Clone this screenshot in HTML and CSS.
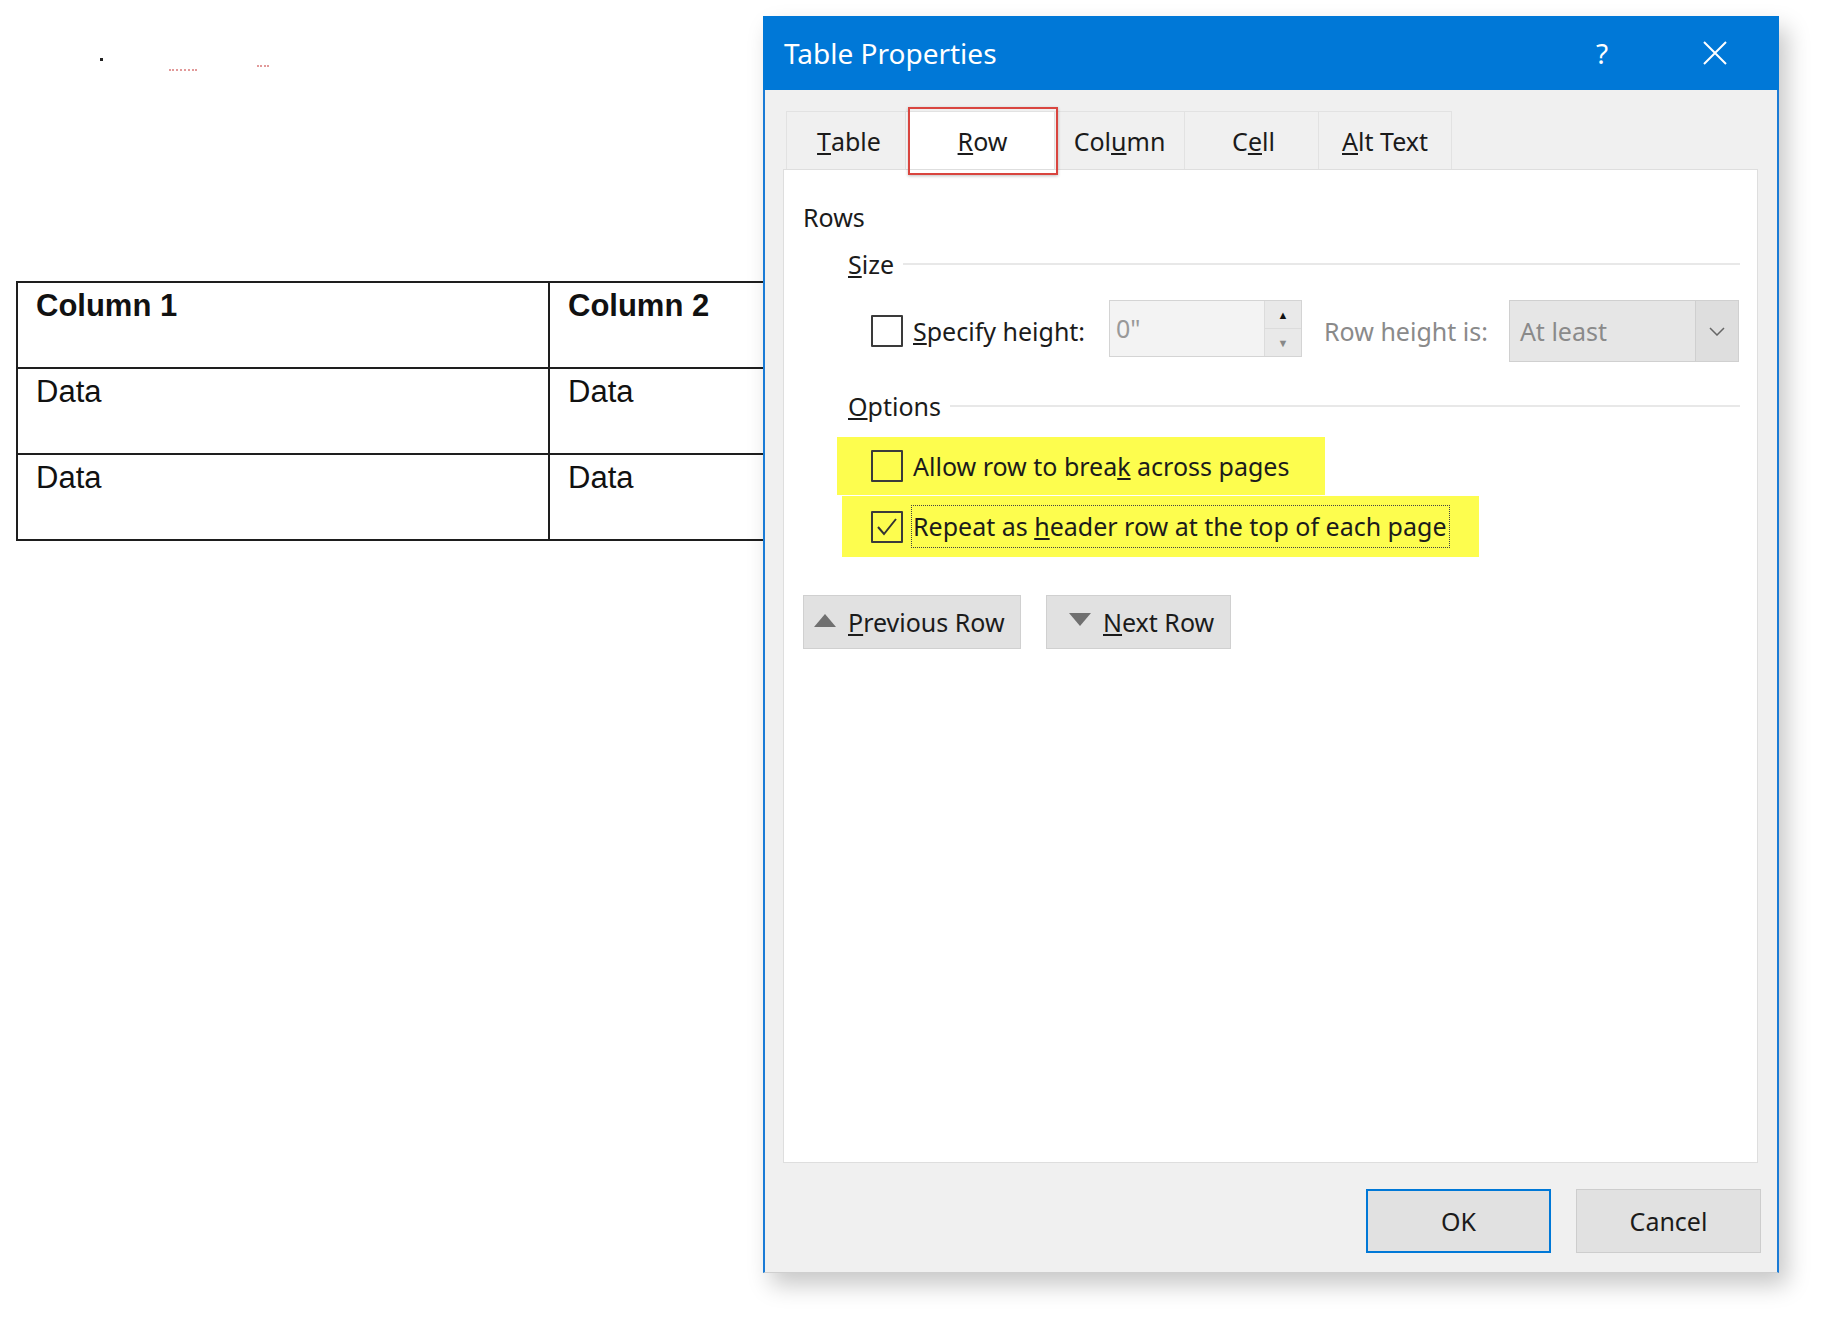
FILE: index.html
```html
<!DOCTYPE html>
<html lang="en">
<head>
    <meta charset="UTF-8">
    <title>Table Properties</title>
    <link rel="stylesheet" href="styles.css">
</head>
<body>

    <div class="doc">
        <div class="marks">
            <span class="mark-dot"></span>
            <span class="mark-red"></span>
            <span class="mark-red short"></span>
        </div>

        <table class="word-table">
            <tr>
                <th>Column 1</th>
                <th>Column 2</th>
            </tr>
            <tr>
                <td>Data</td>
                <td>Data</td>
            </tr>
            <tr>
                <td>Data</td>
                <td>Data</td>
            </tr>
        </table>
    </div>

    <div class="dialog">
        <div class="titlebar">
            <span class="title">Table Properties</span>
            <span class="help">?</span>
            <span class="close">
                <svg width="24" height="24" viewBox="0 0 24 24"><path d="M1 1 L23 23 M23 1 L1 23" stroke="#fff" stroke-width="2" fill="none"/></svg>
            </span>
        </div>

        <div class="dialog-body">
            <div class="tabs">
                <div class="tab tab-table"><u>T</u>able</div>
                <div class="tab tab-row selected"><u>R</u>ow</div>
                <div class="tab tab-column">Col<u>u</u>mn</div>
                <div class="tab tab-cell">C<u>e</u>ll</div>
                <div class="tab tab-alt"><u>A</u>lt Text</div>
            </div>

            <div class="panel">
                <div class="section-title">Rows</div>

                <div class="group-head">
                    <span><u>S</u>ize</span>
                    <span class="group-line"></span>
                </div>

                <div class="size-row">
                    <span class="checkbox"></span>
                    <span class="label"><u>S</u>pecify height:</span>
                    <div class="spin-input">
                        <span class="spin-value">0"</span>
                        <span class="spin-buttons">
                            <span class="spin-up">&#9650;</span>
                            <span class="spin-down">&#9660;</span>
                        </span>
                    </div>
                    <span class="label disabled height-label">Row height is:</span>
                    <div class="select">
                        <span class="select-value">At least</span>
                        <span class="select-arrow">
                            <svg width="16" height="9" viewBox="0 0 16 9"><path d="M1 1 L8 8 L15 1" stroke="#666" stroke-width="1.5" fill="none"/></svg>
                        </span>
                    </div>
                </div>

                <div class="group-head options-head">
                    <span><u>O</u>ptions</span>
                    <span class="group-line"></span>
                </div>

                <div class="option option-break">
                    <span class="checkbox"></span>
                    <span class="label">Allow row to brea<u>k</u> across pages</span>
                </div>
                <div class="option option-repeat">
                    <span class="checkbox">
                        <svg width="28" height="28" viewBox="0 0 28 28"><path d="M5 14 L11 21 L23 6" stroke="#333" stroke-width="2" fill="none"/></svg>
                    </span>
                    <span class="label focused">Repeat as <u>h</u>eader row at the top of each page</span>
                </div>

                <div class="nav-buttons">
                    <button class="nav-btn prev"><span class="tri-up"></span><span><u>P</u>revious Row</span></button>
                    <button class="nav-btn next"><span class="tri-down"></span><span><u>N</u>ext Row</span></button>
                </div>
            </div>

            <div class="footer">
                <button class="dlg-btn default">OK</button>
                <button class="dlg-btn">Cancel</button>
            </div>
        </div>
    </div>

</body>
</html>
```

FILE: styles.css
```css
body {
    margin: 0;
    background-color: #fff;
    font-family: "Noto Sans", "Open Sans", sans-serif;
    color: #1b1b1b;
    width: 1826px;
    height: 1318px;
    overflow: hidden;
    position: relative;
}

/* document behind the dialog */
.doc {
    padding: 56px 0 0 16px;
    font-family: "Liberation Sans", Arial, sans-serif;
}
.marks {
    height: 225px;
    display: flex;
    align-items: flex-start;
}
.mark-dot {
    width: 3px;
    height: 3px;
    background-color: #222;
    margin: 2px 0 0 84px;
}
.mark-red {
    width: 28px;
    height: 0;
    border-top: 2px dotted #e29a9a;
    margin: 13px 0 0 66px;
}
.mark-red.short {
    width: 12px;
    margin: 9px 0 0 60px;
}
.word-table {
    border-collapse: collapse;
    border: 2px solid #1e1e1e;
    width: 1000px;
    color: #111;
}
.word-table th,
.word-table td {
    border: 2px solid #1e1e1e;
    box-sizing: border-box;
    height: 86px;
    padding: 5px 18px 0;
    text-align: left;
    vertical-align: top;
    font-size: 31px;
}
.word-table th {
    font-weight: bold;
}
.word-table th:first-child {
    width: 532px;
}

/* dialog window */
.dialog {
    position: absolute;
    left: 763px;
    top: 16px;
    width: 1016px;
    height: 1257px;
    box-sizing: border-box;
    border-left: 2px solid #1a7bd6;
    border-right: 2px solid #1a7bd6;
    border-bottom: 1px solid #cfcfcf;
    display: flex;
    flex-direction: column;
    box-shadow: 8px 12px 22px rgba(0, 0, 0, 0.22);
    font-size: 25px;
}
.titlebar {
    height: 74px;
    background-color: #0078d7;
    color: #fff;
    display: flex;
    align-items: center;
    margin: 0 -2px;
    padding-left: 21px;
}
.title {
    font-size: 28px;
    flex: 1;
}
.help {
    font-size: 28px;
    width: 30px;
    text-align: center;
    margin-right: 86px;
}
.close {
    display: flex;
    margin-right: 52px;
}
.dialog-body {
    flex: 1;
    background-color: #f0f0f0;
    display: flex;
    flex-direction: column;
    padding: 21px 19px 19px 18px;
}

/* tabs */
.tabs {
    display: flex;
    height: 58px;
    padding-left: 3px;
}
.tab {
    box-sizing: border-box;
    display: flex;
    align-items: center;
    justify-content: center;
    border: 1px solid #e2e2e2;
    border-bottom: none;
    border-left: none;
    padding-top: 1px;
}
.tab-table { width: 120px; border-left: 1px solid #e2e2e2; padding-left: 6px; }
.tab-row { width: 149px; padding-left: 5px; }
.tab-column { width: 130px; }
.tab-cell { width: 134px; padding-left: 4px; }
.tab-alt { width: 133px; }
.tab.selected {
    background-color: #fff;
    position: relative;
    z-index: 1;
}
.tab.selected::after {
    content: "";
    position: absolute;
    left: 2px;
    right: -4px;
    top: -5px;
    bottom: -6px;
    border: 2px solid #d9453f;
    box-shadow: 0 1px 3px rgba(0, 0, 0, 0.25);
}

/* panel */
.panel {
    flex: 1;
    background-color: #fff;
    border: 1px solid #dedede;
    padding-top: 31px;
}
.section-title {
    margin-left: 19px;
    line-height: 32px;
}
.group-head {
    display: flex;
    align-items: center;
    margin: 15px 17px 0 64px;
    line-height: 32px;
}
.group-line {
    flex: 1;
    height: 2px;
    background-color: #e8e8e8;
    margin-left: 9px;
}
.options-head {
    margin-top: 28px;
}
.checkbox {
    width: 32px;
    height: 32px;
    box-sizing: border-box;
    border: 2px solid #3a3a3a;
    border-radius: 1px;
    display: flex;
    align-items: center;
    justify-content: center;
    flex-shrink: 0;
}
.size-row {
    display: flex;
    align-items: center;
    margin: 20px 0 0 87px;
    height: 62px;
}
.size-row > * {
    flex-shrink: 0;
}
.label {
    margin-left: 10px;
}
.disabled {
    color: #8a8a8a;
}
.spin-input {
    margin-left: 24px;
    width: 193px;
    height: 57px;
    box-sizing: border-box;
    border: 1px solid #d4d4d4;
    background-color: #f3f3f3;
    display: flex;
    align-self: flex-start;
}
.spin-value {
    flex: 1;
    color: #999;
    padding: 10px 0 0 6px;
}
.spin-buttons {
    width: 36px;
    display: flex;
    flex-direction: column;
    border-left: 1px solid #dcdcdc;
    background-color: #e9e9e9;
    font-size: 11px;
}
.spin-buttons span {
    flex: 1;
    display: flex;
    align-items: center;
    justify-content: center;
}
.spin-up {
    color: #111;
    border-bottom: 1px solid #dcdcdc;
}
.spin-down {
    color: #888;
}
.height-label {
    margin-left: 22px;
}
.select {
    margin-left: 21px;
    width: 230px;
    height: 62px;
    box-sizing: border-box;
    border: 1px solid #d0d0d0;
    background-color: #e6e6e6;
    display: flex;
}
.select-value {
    flex: 1;
    color: #8a8a8a;
    display: flex;
    align-items: center;
    padding-left: 10px;
}
.select-arrow {
    width: 42px;
    border-left: 1px solid #cfcfcf;
    background-color: #dedede;
    display: flex;
    align-items: center;
    justify-content: center;
}

/* options with yellow highlight */
.option {
    display: flex;
    align-items: center;
    background-color: #fdfd4e;
    box-sizing: border-box;
}
.option-break {
    margin: 15px 0 0 53px;
    width: 488px;
    height: 58px;
    padding-left: 34px;
}
.option-repeat {
    margin: 1px 0 0 58px;
    width: 637px;
    height: 61px;
    padding-left: 29px;
}
.option-repeat .label {
    margin-left: 8px;
}
.focused {
    border: 1px dotted #444;
    padding: 3px 2px 4px 1px;
}

/* previous / next */
.nav-buttons {
    display: flex;
    gap: 25px;
    margin: 38px 0 0 19px;
}
.nav-btn {
    height: 54px;
    background-color: #e1e1e1;
    border: 1px solid #d0d0d0;
    font-family: inherit;
    font-size: 25px;
    color: #1b1b1b;
    display: flex;
    align-items: center;
    padding: 0 0 0 10px;
    gap: 12px;
}
.nav-btn.prev { width: 218px; }
.nav-btn.next { width: 185px; padding-left: 22px; }
.tri-up {
    width: 0;
    height: 0;
    border-left: 11px solid transparent;
    border-right: 11px solid transparent;
    border-bottom: 13px solid #707070;
    margin-top: -4px;
}
.tri-down {
    width: 0;
    height: 0;
    border-left: 11px solid transparent;
    border-right: 11px solid transparent;
    border-top: 13px solid #707070;
    margin-top: -6px;
}

/* ok / cancel */
.footer {
    display: flex;
    justify-content: flex-end;
    gap: 25px;
    padding-top: 26px;
    margin-right: -3px;
}
.dlg-btn {
    width: 185px;
    height: 64px;
    background-color: #e1e1e1;
    border: 1px solid #cdcdcd;
    font-family: inherit;
    font-size: 25px;
    color: #1b1b1b;
}
.dlg-btn.default {
    border: 2px solid #0078d7;
}
```
